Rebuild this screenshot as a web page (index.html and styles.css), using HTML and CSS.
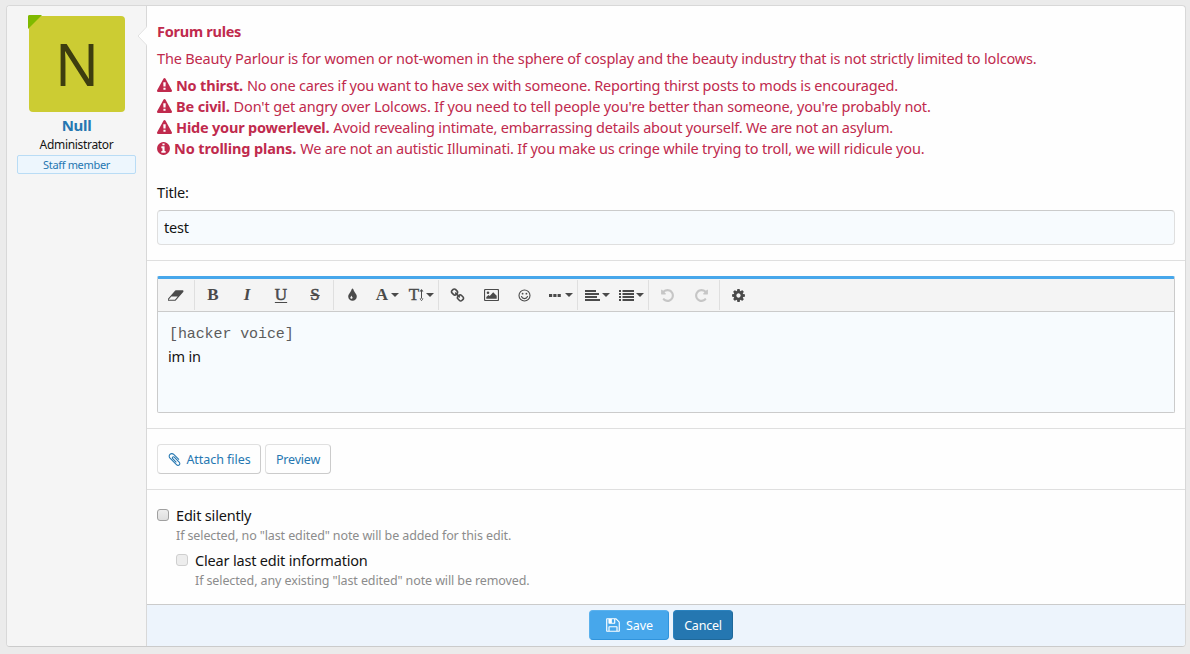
FILE: index.html
```html
<!DOCTYPE html>
<html lang="en">
<head>
<meta charset="utf-8">
<title>Edit post</title>
<link rel="stylesheet" href="styles.css">
</head>
<body>
<svg class="defs" width="0" height="0" aria-hidden="true">
  <symbol id="warn" viewBox="0 0 1792 1792"><path d="M1024 1375v-190q0-14-9.500-23.500t-22.500-9.500h-192q-13 0-22.500 9.500t-9.500 23.500v190q0 14 9.500 23.500t22.500 9.500h192q13 0 22.500-9.500t9.500-23.500zm-2-374l18-459q0-12-10-19-13-11-24-11h-220q-11 0-24 11-10 7-10 21l17 457q0 10 10 16.500t24 6.500h185q14 0 23.500-6.500t10.500-16.500zm-14-934l768 1408q35 63-2 126-17 29-46.500 46t-63.500 17h-1536q-34 0-63.500-17t-46.500-46q-37-63-2-126l768-1408q17-31 47-49t65-18 65 18 47 49z"/></symbol>
  <symbol id="info" viewBox="128 0 1536 1792"><path d="M1152 1376v-160q0-14-9-23t-23-9h-96v-512q0-14-9-23t-23-9h-320q-14 0-23 9t-9 23v160q0 14 9 23t23 9h96v320h-96q-14 0-23 9t-9 23v160q0 14 9 23t23 9h448q14 0 23-9t9-23zm-128-896v-160q0-14-9-23t-23-9h-192q-14 0-23 9t-9 23v160q0 14 9 23t23 9h192q14 0 23-9t9-23zm640 416q0 209-103 385.500t-279.500 279.500-385.500 103-385.500-103-279.500-279.500-103-385.500 103-385.500 279.500-279.500 385.500-103 385.500 103 279.500 279.500 103 385.500z"/></symbol>
  <symbol id="undo" viewBox="0 0 1792 1792"><path d="M1664 896q0 156-61 298t-164 245-245 164-298 61q-172 0-327-72.500t-264-204.500q-7-10-6.500-22.500t8.500-20.500l137-138q10-9 25-9 16 2 23 12 73 95 179 147t225 52q104 0 198.500-40.500t163.500-109.500 109.500-163.500 40.500-198.500-40.500-198.500-109.500-163.500-163.500-109.500-198.500-40.500q-98 0-188 35.500t-160 101.500l137 138q31 30 14 69-17 40-59 40h-448q-26 0-45-19t-19-45v-448q0-42 40-59 39-17 69 14l130 129q107-101 244.500-156.500t284.500-55.500q156 0 298 61t245 164 164 245 61 298z"/></symbol>
</svg>

<main class="panel">
  <aside class="user">
    <div class="avatar">N<i class="corner"></i></div>
    <a class="username">Null</a>
    <div class="usertitle">Administrator</div>
    <div class="banner">Staff member</div>
    <svg class="pointer" width="10" height="20" viewBox="0 0 10 20"><path d="M10 0.500L1 10L10 19.500" fill="#fefefe" stroke="#e2e2e2"/></svg>
  </aside>
  <form class="content">
    <section class="intro">
      <div class="rules">
        <b class="rules-head">Forum rules</b>
        <p class="rules-lead">The Beauty Parlour is for women or not-women in the sphere of cosplay and the beauty industry that is not strictly limited to lolcows.</p>
        <p class="rule r1"><svg class="fa"><use href="#warn"/></svg><b>No thirst.</b> <span>No one cares if you want to have sex with someone. Reporting thirst posts to mods is encouraged.</span></p>
        <p class="rule r2"><svg class="fa"><use href="#warn"/></svg><b>Be civil.</b> <span>Don't get angry over Lolcows. If you need to tell people you're better than someone, you're probably not.</span></p>
        <p class="rule r3"><svg class="fa"><use href="#warn"/></svg><b>Hide your powerlevel.</b> <span>Avoid revealing intimate, embarrassing details about yourself. We are not an asylum.</span></p>
        <p class="rule r4"><svg class="fa fa-info"><use href="#info"/></svg><b>No trolling plans.</b> <span>We are not an autistic Illuminati. If you make us cringe while trying to troll, we will ridicule you.</span></p>
      </div>
      <div class="label">Title:</div>
      <div class="input">test</div>
    </section>

    <section class="editing">
      <div class="editor">
        <div class="toolbar">
          <div class="group">
            <span class="btn"><svg width="16" height="15" viewBox="0 0 1920 1792"><path d="M832 1408l336-384h-768l-336 384h768zm1013-1077q15 34 9.500 71.500t-30.500 65.500l-896 1024q-38 44-96 44h-768q-38 0-69.500-20.500t-47.500-54.500q-15-34-9.500-71.500t30.500-65.500l896-1024q38-44 96-44h768q38 0 69.500 20.500t47.500 54.500z"/></svg></span>
          </div>
          <div class="group">
            <span class="btn serif">B</span>
            <span class="btn serif italic">I</span>
            <span class="btn serif underline">U</span>
            <span class="btn serif strike">S</span>
          </div>
          <div class="group">
            <span class="btn"><svg width="15" height="15" viewBox="0 0 1792 1792"><path d="M896 1152q0-36-20-69-1-1-15.500-22.500t-25.500-38-25-44-21-50.500q-4-16-21-16t-21 16q-7 23-21 50.500t-25 44-25.500 38-15.500 22.500q-20 33-20 69 0 53 37.500 90.500t90.500 37.500 90.500-37.500 37.500-90.500zm512-128q0 212-150 362t-362 150-362-150-150-362q0-145 81-275 6-9 62.500-90.500t101-151 99.500-178 83-201.500q9-30 34-47t51-17 51.500 17 33.500 47q28 93 83 201.500t99.500 178 101 151 62.500 90.500q81 127 81 275z"/></svg></span>
            <span class="btn serif drop">A<i class="caret"></i></span>
            <span class="btn serif drop size">T<svg width="5" height="14" viewBox="0 0 5 14"><path d="M2 2h1v10h-1zM.5 3.500L2.500 1L4.500 3.500zM.5 10.500L2.500 13L4.500 10.500z"/></svg><i class="caret"></i></span>
          </div>
          <div class="group">
            <span class="btn"><svg width="15" height="15" viewBox="0 0 1792 1792"><path d="M1520 1216q0-40-28-68l-208-208q-28-28-68-28-42 0-72 32 3 3 19 18.500t21.500 21.500 15 19 13 25.500 3.500 27.500q0 40-28 68t-68 28q-15 0-27.500-3.500t-25.500-13-19-15-21.500-21.500-18.500-19q-33 31-33 73 0 40 28 68l206 207q27 27 68 27 40 0 68-26l147-146q28-28 28-67zm-703-705q0-40-28-68l-206-207q-28-28-68-28-39 0-68 27l-147 146q-28 28-28 67 0 40 28 68l208 208q27 27 68 27 42 0 72-31-3-3-19-18.500t-21.500-21.500-15-19-13-25.500-3.500-27.500q0-40 28-68t68-28q15 0 27.500 3.500t25.500 13 19 15 21.500 21.500 18.500 19q33-31 33-73zm895 705q0 120-85 203l-147 146q-83 83-203 83-121 0-204-85l-206-207q-83-83-83-203 0-123 88-209l-88-88q-86 88-208 88-120 0-204-84l-208-208q-84-84-84-204t85-203l147-146q83-83 203-83 121 0 204 85l206 207q83 83 83 203 0 123-88 209l88 88q86-88 208-88 120 0 204 84l208 208q84 84 84 204z"/></svg></span>
            <span class="btn"><svg width="15" height="12" viewBox="0 0 15 12"><rect x=".5" y=".5" width="14" height="11" rx="1" fill="none" stroke="#4a4a4a" stroke-width="1.200"/><circle cx="4" cy="3.800" r="1.300"/><path d="M2.300 9.800V8L4.500 6L5.700 7L9.200 3.300L12.700 6.800V9.800z"/></svg></span>
            <span class="btn face"><svg width="13" height="13" viewBox="0 0 13 13"><circle cx="6.500" cy="6.500" r="5.500" fill="none" stroke="#4a4a4a" stroke-width="1.100"/><circle cx="4.600" cy="4.700" r=".9"/><circle cx="8.400" cy="4.700" r=".9"/><path d="M3.500 7.500Q4.200 9.600 6.500 9.600T9.500 7.500" fill="none" stroke="#4a4a4a" stroke-width="1.100" stroke-linecap="round"/></svg></span>
            <span class="btn drop more"><svg width="12" height="3" viewBox="0 0 12 3"><path d="M0 0h3.200v3H0zM4.300 0h3.200v3H4.300zM8.600 0h3.200v3H8.600z"/></svg><i class="caret"></i></span>
          </div>
          <div class="group">
            <span class="btn drop"><svg width="15" height="11" viewBox="0 0 15 11"><path d="M0 0h11v2H0zM0 3h14v2H0zM0 6h12v2H0zM0 9h15v2H0z"/></svg><i class="caret near"></i></span>
            <span class="btn drop"><svg width="15" height="11" viewBox="0 0 15 11"><path d="M0 0h2v2H0zM0 3h2v2H0zM0 6h2v2H0zM0 9h2v2H0zM3.500 0H15v2H3.500zM3.500 3H15v2H3.500zM3.500 6H15v2H3.500zM3.500 9H15v2H3.500z"/></svg><i class="caret near"></i></span>
          </div>
          <div class="group">
            <span class="btn disabled"><svg width="15" height="15"><use href="#undo"/></svg></span>
            <span class="btn disabled"><svg class="flip" width="15" height="15"><use href="#undo"/></svg></span>
          </div>
          <div class="group last">
            <span class="btn"><svg width="15" height="15" viewBox="0 0 1792 1792"><path d="M1152 896q0-106-75-181t-181-75-181 75-75 181 75 181 181 75 181-75 75-181zm512-109v222q0 12-8 23t-20 13l-185 28q-19 54-39 91 35 50 107 138 10 12 10 25t-9 23q-27 37-99 108t-94 71q-12 0-26-9l-138-108q-44 23-91 38-16 136-29 186-7 28-36 28h-222q-14 0-24.500-8.500t-11.500-21.500l-28-184q-49-16-90-37l-141 107q-10 9-25 9-14 0-25-11-126-114-165-168-7-10-7-23 0-12 8-23 15-21 51-66.500t54-70.500q-27-50-41-99l-183-27q-13-2-21-12.500t-8-23.500v-222q0-12 8-23t19-13l186-28q14-46 39-92-40-57-107-138-10-12-10-24 0-10 9-23 26-36 98.500-107.500t94.500-71.500q13 0 26 10l138 107q44-23 91-38 16-136 29-186 7-28 36-28h222q14 0 24.500 8.500t11.500 21.500l28 184q49 16 90 37l142-107q9-9 24-9 13 0 25 10 129 119 165 170 7 8 7 22 0 12-8 23-15 21-51 66.500t-54 70.500q26 50 41 98l183 28q13 2 21 12.500t8 23.500z"/></svg></span>
          </div>
        </div>
        <div class="text">
          <div class="code">[hacker voice]</div>
          <div class="line">im in</div>
        </div>
      </div>
    </section>

    <section class="actions">
      <span class="button attach"><svg width="15" height="15" viewBox="0 0 1792 1792"><path d="M1596 1385q0 117-79 196t-196 79q-135 0-235-100l-777-776q-113-115-113-271 0-159 110-270t269-111q158 0 273 113l605 606q10 10 10 22 0 16-30.500 46.500t-46.500 30.500q-13 0-23-10l-606-607q-79-77-181-77-106 0-179 75t-73 181q0 105 76 181l776 777q63 63 145 63 64 0 106-42t42-106q0-82-63-145l-581-581q-26-24-60-24-29 0-48 19t-19 48q0 32 25 59l410 410q10 10 10 22 0 16-31 47t-47 31q-12 0-22-10l-410-410q-63-61-63-149 0-82 57-139t139-57q88 0 149 63l581 581q100 98 100 235z"/></svg><span>Attach files</span></span>
      <span class="button preview">Preview</span>
    </section>

    <section class="options">
      <div class="option">
        <i class="check"></i>
        <div>
          <div class="opt-label">Edit silently</div>
          <div class="hint">If selected, no "last edited" note will be added for this edit.</div>
        </div>
      </div>
      <div class="option nested">
        <i class="check off"></i>
        <div>
          <div class="opt-label">Clear last edit information</div>
          <div class="hint">If selected, any existing "last edited" note will be removed.</div>
        </div>
      </div>
    </section>

    <footer class="footer">
      <span class="button save"><svg width="16" height="16" viewBox="0 0 1792 1792"><path d="M512 1536h768v-384h-768v384zm896 0h128v-896q0-14-10-38.500t-20-34.500l-281-281q-10-10-34-20t-39-10v416q0 40-28 68t-68 28h-576q-40 0-68-28t-28-68v-416h-128v1280h128v-416q0-40 28-68t68-28h832q40 0 68 28t28 68v416zm-384-928v-320q0-13-9.500-22.500t-22.500-9.500h-192q-13 0-22.500 9.500t-9.500 22.500v320q0 13 9.500 22.500t22.500 9.500h192q13 0 22.500-9.500t9.500-22.500zm640 32v928q0 40-28 68t-68 28h-1344q-40 0-68-28t-28-68v-1344q0-40 28-68t68-28h928q40 0 88 20t76 48l280 280q28 28 48 76t20 88z"/></svg><span>Save</span></span>
      <span class="button cancel">Cancel</span>
    </footer>
  </form>
</main>
</body>
</html>
```
FILE: styles.css
```css
* { box-sizing: border-box; }
body { margin: 0; padding: 5px 4px 7px 6px; height: 654px; overflow: hidden; background: #ebebeb; color: #141414; font-family: "Noto Sans", "Open Sans", sans-serif; font-size: 14.5px; letter-spacing: -.18px; line-height: 21px; white-space: nowrap; }
p { margin: 0; }
svg { display: block; fill: currentColor; flex: none; }
.defs { position: absolute; }

.panel { display: flex; width: 1180px; height: 642px; border: 1px solid #d8d8d8; border-bottom-color: #cbcbcb; border-radius: 4px; background: #fefefe; overflow: hidden; }

.user { position: relative; flex: none; width: 140px; padding: 10px; border-right: 1px solid #d8d8d8; background: #f5f5f5; text-align: center; }
.avatar { position: relative; width: 96px; height: 96px; margin: 0 auto 0 12px; border-radius: 4px; background: #cccc33; color: #3d3d0f; font-size: 58px; line-height: 95px; letter-spacing: 0; }
.corner { position: absolute; left: -1px; top: -1px; border: 7px solid transparent; border-top-color: #7fb900; border-left-color: #7fb900; border-radius: 2px 0 0 0; }
.username { display: block; margin-top: 3px; color: #2577b1; font-size: 15px; font-weight: 700; line-height: 21px; letter-spacing: -.3px; }
.usertitle { font-size: 12px; line-height: 18px; letter-spacing: -.32px; }
.banner { height: 19px; margin-top: 1px; border: 1px solid #b9dcf5; border-radius: 2px; background: #edf6fd; color: #2577b1; font-size: 11px; line-height: 17px; letter-spacing: -.33px; }
.pointer { position: absolute; right: -1px; top: 20px; }

.content { flex: 1; display: flex; flex-direction: column; }
.content section { flex: none; padding: 15px 10px; border-bottom: 1px solid #dfdfdf; }

.content .intro { height: 255px; }
.rules { color: #c02a4d; }
.rules-head { display: block; letter-spacing: -.26px; }
.rules-lead { margin: 6px 0; }
.rule { display: flex; align-items: center; height: 21px; }
.rule b { margin: 0 4px 0 4px; }
.r2 { letter-spacing: -.146px; }
.r3 { letter-spacing: -.2px; }
.r4 { letter-spacing: -.185px; }
.rule.r4 b { letter-spacing: -.13px; }
.fa { width: 15px; height: 15px; }
.fa-info { width: 13px; }
.label { margin-top: 23px; }
.input { height: 35px; margin-top: 7px; padding: 6px; border: 1px solid #dfdfdf; border-top-color: #cbcbcb; border-radius: 4px; background: #f7fbfe; }

.content .editing { height: 168px; }
.editor { height: 137px; border: 1px solid #cbcbcb; border-top: 3px solid #47a7eb; border-radius: 2px; background: #f7fbfe; }
.toolbar { display: flex; height: 33px; padding-top: 1px; border-bottom: 1px solid #cbcbcb; background: #f4f4f4; color: #4a4a4a; }
.group { display: flex; height: 30px; padding: 0 1px; border-right: 1px solid #dfdfdf; }
.group.last { border: 0; }
.btn { display: flex; align-items: center; justify-content: center; width: 34px; height: 30px; }
.serif { font: 700 17px/30px "Liberation Serif", serif; letter-spacing: 0; }
.italic { font-style: italic; }
.underline { font-weight: 400; -webkit-text-stroke: .5px; text-decoration: underline; text-decoration-thickness: 1px; text-underline-offset: 2px; }
.strike { font-weight: 400; -webkit-text-stroke: .5px; text-decoration: line-through; text-decoration-thickness: 1px; }
.drop { padding-left: 3px; }
.size { font-weight: 400; -webkit-text-stroke: .4px; }
.caret { margin-left: 3px; border: 4px solid transparent; border-top-color: #4a4a4a; border-bottom: 0; }
.size .caret, .near { margin-left: 2px; }
.more { padding-left: 4px; }
.more .caret { margin-left: 4px; }
.face { padding-right: 1px; }
.disabled { color: #c6c6c6; }
.flip { transform: scaleX(-1); }
.text { padding: 12px 10px; }
.code { padding-left: 1px; color: #5c5c5c; font: 15px/22px "Liberation Mono", monospace; letter-spacing: -.1px; }
.line { line-height: 20px; }

.content .actions { display: flex; gap: 4px; height: 61px; }
.button { display: flex; align-items: center; justify-content: center; gap: 4px; height: 30px; border: 1px solid; border-radius: 4px; font-size: 12.5px; letter-spacing: -.05px; }
.attach, .preview { border-color: #e0e0e0 #cbcbcb #cbcbcb #e0e0e0; background: #fefefe; color: #2577b1; }
.attach { width: 104px; }
.preview { width: 66px; letter-spacing: -.2px; }

.content .options { height: 115px; border-bottom-color: #cbcbcb; }
.option { display: flex; gap: 7px; height: 45px; }
.nested { padding-left: 19px; }
.check { flex: none; width: 12px; height: 12px; margin-top: 4px; border: 1px solid #a0a0a0; border-radius: 3px; background: linear-gradient(#ededed, #dedede); }
.off { border-color: #cfcfcf; background: #ededed; }
.hint { color: #8c8c8c; font-size: 12.5px; line-height: 19px; letter-spacing: -.11px; }

.footer { display: flex; justify-content: center; gap: 4px; flex: 1; padding: 5px 20px 5px 10px; background: #edf4fc; }
.save { width: 80px; border-color: #5bb1ed #3094dc #3094dc #5bb1ed; background: #47a7eb; color: #fff; gap: 5px; }
.cancel { width: 60px; border-color: #2b82be #1f6899 #1f6899 #2b82be; background: #2577b1; color: #fff; letter-spacing: -.2px; }
```
